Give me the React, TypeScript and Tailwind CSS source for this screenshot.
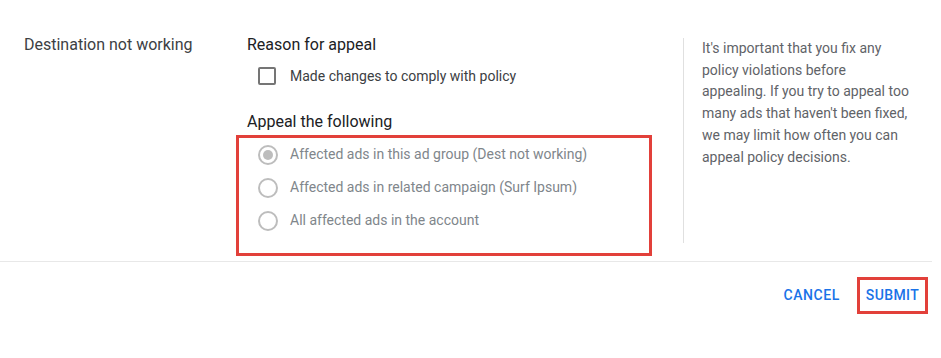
import React from "react";

function Radio({ checked }: { checked?: boolean }) {
  return (
    <span className="flex h-[20px] w-[20px] items-center justify-center rounded-full border-2 border-[#bdbdbd]">
      {checked && <span className="h-[10px] w-[10px] rounded-full bg-[#bdbdbd]" />}
    </span>
  );
}

export default function App() {
  const options = [
    { label: "Affected ads in this ad group (Dest not working)", checked: true },
    { label: "Affected ads in related campaign (Surf Ipsum)", checked: false },
    { label: "All affected ads in the account", checked: false },
  ];
  const helpLines = [
    "It's important that you fix any",
    "policy violations before",
    "appealing. If you try to appeal too",
    "many ads that haven't been fixed,",
    "we may limit how often you can",
    "appeal policy decisions.",
  ];
  return (
    <div
      className="h-[358px] w-[941px] bg-white text-[#3c4043]"
      style={{ fontFamily: "Roboto, 'Liberation Sans', sans-serif" }}
    >
      <div className="flex h-[261px] pt-[35px]">
        <div className="w-[247px] shrink-0 pl-[24px] text-[16px] leading-[20px] text-[#3c4043]">
          Destination not working
        </div>
        <div className="w-[436px] shrink-0">
          <div className="text-[16px] leading-[20px] text-[#202124]">Reason for appeal</div>
          <div className="mt-[9px] flex h-[24px] items-center pl-[11px]">
            <span className="h-[18px] w-[18px] rounded-[2px] border-2 border-[#757575]" />
            <span className="ml-[14px] text-[14px] text-[#3c4043]">Made changes to comply with policy</span>
          </div>
          <div className="mt-[24px] text-[16px] leading-[20px] text-[#202124]">Appeal the following</div>
          <div className="mt-[3px] -ml-[11px] w-[416px] border-[3px] border-[#e2403a] pb-[16px] pl-[19px]">
            {options.map((o) => (
              <div key={o.label} className="flex h-[33px] items-center">
                <Radio checked={o.checked} />
                <span className="ml-[12px] text-[14px] text-[#80868b]">{o.label}</span>
              </div>
            ))}
          </div>
        </div>
        <div className="mt-[3px] h-[205px] shrink-0 border-l border-[#e0e0e0] pl-[18px]">
          <p className="w-[230px] text-[14px] leading-[21.7px] text-[#5f6368]">
            {helpLines.map((l, i) => (
              <span key={i} className="block whitespace-nowrap">
                {l}
              </span>
            ))}
          </p>
        </div>
      </div>
      <div className="h-px w-[932px] bg-[#e8e8e8]" />
      <div className="flex items-center justify-end pr-[13px] pt-[15px]">
        <button className="text-[14px] font-medium tracking-[0.6px] text-[#1a73e8]">CANCEL</button>
        <button className="ml-[17px] flex h-[37px] w-[71px] items-center justify-center border-[3px] border-[#e2403a] text-[14px] font-medium tracking-[0.4px] text-[#1a73e8]">
          SUBMIT
        </button>
      </div>
    </div>
  );
}
